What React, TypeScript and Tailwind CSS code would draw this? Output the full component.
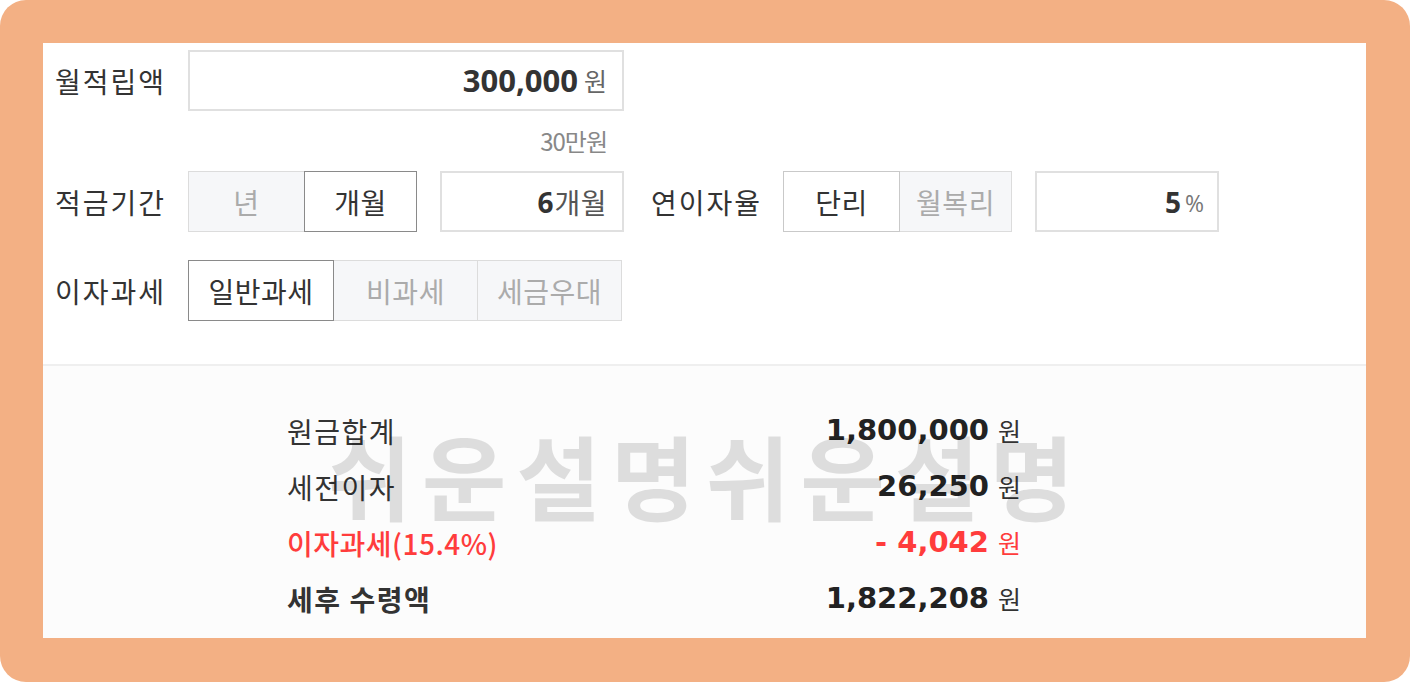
import React from "react";

const KR = "font-['Noto_Sans_CJK_KR','Noto_Sans',sans-serif]";

function Seg({
  items,
}: {
  items: { label: string; w: string; active?: boolean; strong?: boolean }[];
}) {
  return (
    <div className="flex h-full">
      {items.map((it, i) => (
        <div
          key={i}
          className={
            "relative flex h-full items-center justify-center border text-[28px] tracking-[0.5px] " +
            it.w +
            (i > 0 ? " -ml-px" : "") +
            (it.active
              ? it.strong
                ? " z-10 border-[#8a8a8a] bg-white text-[#333]"
                : " z-10 border-[#c9c9c9] bg-white text-[#333]"
              : " border-[#dcdcdc] bg-[#f6f7f9] text-[#ababab]")
          }
        >
          {it.label}
        </div>
      ))}
    </div>
  );
}

function Label({ text, w }: { text: string; w: string }) {
  return (
    <div className={"flex h-full items-center text-[28px] tracking-[2px] text-[#333] " + w}>
      {text}
    </div>
  );
}

function ResultRow({
  label,
  value,
  red,
  bold,
}: {
  label: string;
  value: string;
  red?: boolean;
  bold?: boolean;
}) {
  return (
    <div className="flex h-[56px] items-center justify-between">
      <div
        className={
          "text-[28px] " +
          (red ? "font-medium tracking-[0.5px] text-[#ff3c3c]" : "tracking-[1.5px] text-[#333]") +
          (bold ? " font-bold" : "")
        }
      >
        {label}
      </div>
      <div className="flex items-center">
        <span
          className={
            "font-['DejaVu_Sans',sans-serif] text-[29px] font-bold " +
            (red ? "text-[#ff3c3c]" : "text-[#222]")
          }
        >
          {value}
        </span>
        <span
          className={
            "ml-[9px] text-[25px] " + (red ? "text-[#ff3c3c]" : "text-[#333]")
          }
        >
          원
        </span>
      </div>
    </div>
  );
}

export default function App() {
  return (
    <div className={"h-[682px] w-[1410px] bg-white " + KR}>
      <div className="h-full w-full rounded-[26px] bg-[#f3b084] pb-[44px] pl-[43px] pr-[44px] pt-[43px]">
        <div className="relative flex h-full flex-col bg-white">
          {/* top form */}
          <div className="h-[323px] border-b-2 border-[#efefef] pl-[12px] pt-[7px]">
            {/* row 1 */}
            <div className="flex h-[61px] items-center">
              <Label text="월적립액" w="w-[133px]" />
              <div className="flex h-full w-[436px] items-center justify-end border-2 border-[#e0e0e0] pr-[15px]">
                <span className="font-['Open_Sans',sans-serif] text-[31px] font-bold text-[#333]">
                  300,000
                </span>
                <span className="ml-[6px] text-[25px] text-[#666]">원</span>
              </div>
            </div>
            <div className="flex h-[60px] w-[569px] items-center justify-end pr-[17px] text-[24px] tracking-[-1px] text-[#888]">
              30만원
            </div>
            {/* row 2 */}
            <div className="flex h-[61px] items-center">
              <Label text="적금기간" w="w-[133px]" />
              <Seg
                items={[
                  { label: "년", w: "w-[117px]" },
                  { label: "개월", w: "w-[113px]", active: true, strong: true },
                ]}
              />
              <div className="ml-[23px] flex h-full w-[184px] items-center justify-end border-2 border-[#e0e0e0] pr-[15px]">
                <span className="font-['Open_Sans',sans-serif] text-[28px] font-bold text-[#333]">
                  6
                </span>
                <span className="ml-[1px] text-[28px] tracking-[0.5px] text-[#555]">개월</span>
              </div>
              <Label text="연이자율" w="ml-[27px] w-[132px]" />
              <Seg
                items={[
                  { label: "단리", w: "w-[117px]", active: true },
                  { label: "월복리", w: "w-[113px]" },
                ]}
              />
              <div className="ml-[23px] flex h-full w-[184px] items-center justify-end border-2 border-[#e0e0e0] pr-[13px]">
                <span className="font-['Open_Sans',sans-serif] text-[28px] font-bold text-[#333]">
                  5
                </span>
                <span className="ml-[4px] mt-[4px] font-['Open_Sans',sans-serif] text-[23px] text-[#777]">
                  %
                </span>
              </div>
            </div>
            {/* row 3 */}
            <div className="mt-[28px] flex h-[61px] items-center">
              <Label text="이자과세" w="w-[133px]" />
              <Seg
                items={[
                  { label: "일반과세", w: "w-[146px]", active: true, strong: true },
                  { label: "비과세", w: "w-[145px]" },
                  { label: "세금우대", w: "w-[145px]" },
                ]}
              />
            </div>
          </div>

          {/* results */}
          <div className="relative flex-1 bg-[#fcfcfc]">
            <div className="ml-[244px] w-[734px] pt-[37px]">
              <ResultRow label="원금합계" value="1,800,000" />
              <ResultRow label="세전이자" value="26,250" />
              <ResultRow label="이자과세(15.4%)" value="- 4,042" red />
              <ResultRow label="세후 수령액" value="1,822,208" bold />
            </div>
            <div className="pointer-events-none absolute left-[284px] top-[62px] whitespace-nowrap text-[92px] font-bold leading-none tracking-[10px] text-black/[0.12]">
              쉬운설명쉬운설명
            </div>
          </div>
        </div>
      </div>
    </div>
  );
}
